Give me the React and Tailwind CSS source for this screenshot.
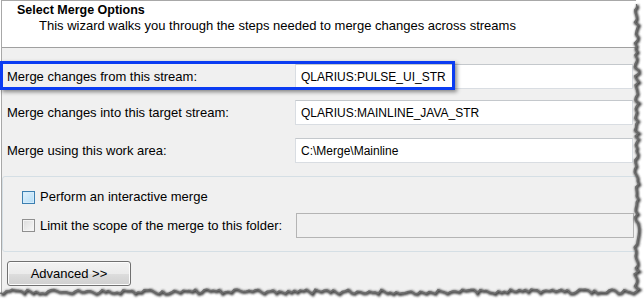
import React from 'react'

// deterministic jitter for the torn paper edge
function jitter(seed) {
  let s = seed
  return () => {
    s = (s * 9301 + 49297) % 233280
    return s / 233280
  }
}

function TornEdge() {
  const r = jitter(7)
  const right = []
  for (let y = 4; y <= 290; y += 3) right.push([634 + r() * 5, y])
  const bottom = []
  for (let x = 636; x >= 0; x -= 3) bottom.push([x, 289 + r() * 5])
  const edge = [...right, ...bottom]
  const line = edge.map(p => p.join(',')).join(' ')
  const outside = `M636,0 L${line.split(' ').join(' L')} L0,300 L644,300 L644,0 Z`

  return (
    <svg className="absolute inset-0" width="644" height="300" viewBox="0 0 644 300">
      <defs>
        <filter id="blur" x="-10%" y="-10%" width="120%" height="120%">
          <feGaussianBlur stdDeviation="1" />
        </filter>
      </defs>
      <path d={outside} fill="#ffffff" />
      <polyline points={line} fill="none" stroke="#3a3a3a" strokeWidth="3" filter="url(#blur)" transform="translate(1,1)" />
      <polyline points={line} fill="none" stroke="#6b6b6b" strokeWidth="1.2" />
    </svg>
  )
}

function TextBox({ value, disabled }) {
  return (
    <div
      className={`w-[338px] h-[25px] flex items-center pl-[5px] text-[12px] border ${
        disabled ? 'bg-[#f0f0f0] border-[#b4b4b4]' : 'bg-white border-[#d9dde2] border-t-[#c4c8cc]'
      }`}
    >
      {value}
    </div>
  )
}

function Row({ label, value, highlight, className }) {
  return (
    <div className={`relative flex items-center h-[25px] ${className}`}>
      {highlight && (
        <div className="absolute left-[-7px] top-[-3px] w-[455px] h-[29px] border-[3px] border-[#0b3cf2] shadow-[2px_2px_4px_rgba(0,0,0,0.45)]" />
      )}
      <span className="w-[288px] shrink-0">{label}</span>
      <TextBox value={value} />
    </div>
  )
}

export default function App() {
  return (
    <div className="relative w-[644px] h-[300px] bg-white overflow-hidden text-[13px] text-black font-['Liberation_Sans',Arial,sans-serif]">
      <div className="w-[638px] h-[296px] ml-[1px] border-l border-t border-[#a8a8a8] bg-[#f0f0f0] flex flex-col">
        {/* Header */}
        <div className="h-[47px] bg-white border-b border-[#a0a0a0] pl-[15px] pt-[1px] leading-[16px]">
          <div className="font-bold text-[12.5px]">Select Merge Options</div>
          <div className="pl-[22px]">This wizard walks you through the steps needed to merge changes across streams</div>
        </div>

        {/* Stream fields */}
        <div className="flex flex-col pl-[5px]">
          <Row className="mt-[16px]" label="Merge changes from this stream:" value="QLARIUS:PULSE_UI_STR" highlight />
          <Row className="mt-[11px]" label="Merge changes into this target stream:" value="QLARIUS:MAINLINE_JAVA_STR" />
          <Row className="mt-[13px]" label="Merge using this work area:" value="C:\Merge\Mainline" />
        </div>

        {/* Options group */}
        <div className="mt-[13px] h-[76px] border border-[#d5dfe5] rounded-[3px] pt-[8px] pl-[19px] flex flex-col">
          <div className="flex items-center h-[24px]">
            <span className="w-[13px] h-[13px] border border-[#3c7fb1] bg-gradient-to-br from-[#e3f2fc] to-[#b3dcf6] shadow-[inset_0_0_0_1px_#d4ecfb]" />
            <span className="ml-[5px]">Perform an interactive merge</span>
          </div>
          <div className="flex items-center h-[25px] mt-[4px]">
            <span className="w-[13px] h-[13px] border border-[#8f8f8f] bg-gradient-to-br from-[#dcdcdc] to-[#f8f8f8] shadow-[inset_0_0_0_1px_#f4f4f4]" />
            <span className="ml-[5px] w-[256px]">Limit the scope of the merge to this folder:</span>
            <TextBox value="" disabled />
          </div>
        </div>

        {/* Advanced button */}
        <div className="pl-[5px] mt-[9px]">
          <button className="w-[124px] h-[25px] border border-[#707070] rounded-[3px] bg-[linear-gradient(to_bottom,#f2f2f2_0%,#ebebeb_50%,#dddddd_51%,#cfcfcf_100%)] shadow-[inset_0_0_0_1px_#fcfcfc] text-[13px]">
            Advanced &gt;&gt;
          </button>
        </div>
      </div>

      <TornEdge />
    </div>
  )
}
